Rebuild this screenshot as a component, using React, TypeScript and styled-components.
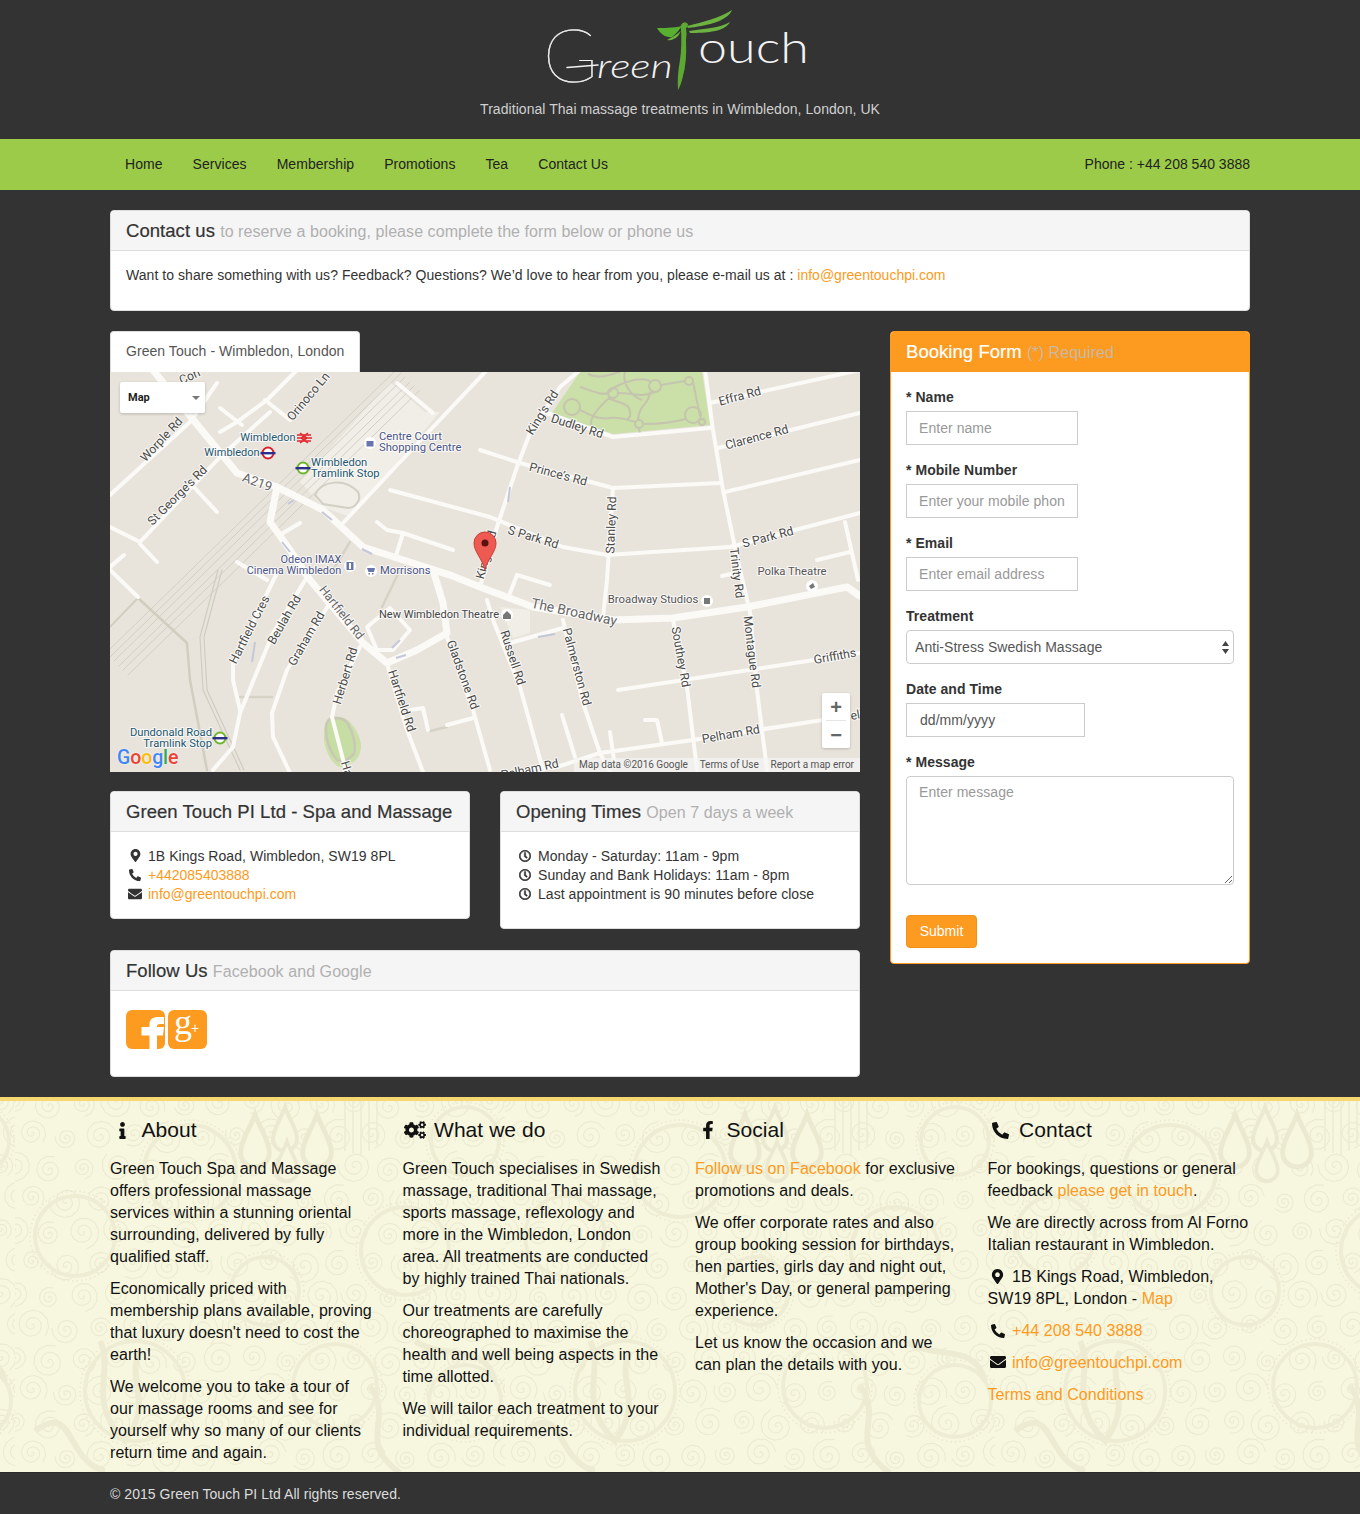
import React from 'react';
import styled, { createGlobalStyle } from 'styled-components';
import { FaMapMarkerAlt, FaPhoneAlt, FaEnvelope, FaRegClock, FaInfo, FaCogs, FaFacebookF } from 'react-icons/fa';

const ORANGE = '#fd9a20';

const Global = createGlobalStyle`
  * { box-sizing: border-box; }
  html, body { margin: 0; padding: 0; background: #333; }
  body { font-family: "Liberation Sans", Arial, sans-serif; font-size: 14px; line-height: 20px; color: #333; letter-spacing: .05px; }
  a { color: ${ORANGE}; text-decoration: none; }
  p { margin: 0 0 10px; }
`;

const Header = styled.header`
  background: #333; height: 139px; padding-top: 8px; display: flex; flex-direction: column; align-items: center;
`;
const LogoSvg = styled.svg` width: 270px; height: 85px; display: block; flex: none; `;
const Tagline = styled.div` margin-top: 6px; color: #d0d0d0; `;

const Nav = styled.nav` background: #9bcb48; height: 51px; `;
const Container = styled.div` width: 1140px; margin: 0 auto; `;
const NavInner = styled(Container)` display: flex; justify-content: space-between; align-items: center; height: 50px; `;
const NavList = styled.div` display: flex; `;
const NavLink = styled.a` color: #222; padding: 0 15px; line-height: 50px; `;
const Phone = styled.div` color: #222; letter-spacing: 0; `;

const Main = styled(Container)` padding: 20px 0; `;
const Panel = styled.section<{ $orange?: boolean }>`
  background: #fff;
  border: 1px solid ${p => (p.$orange ? ORANGE : '#ddd')};
  border-radius: 4px;
  overflow: hidden;
  a { letter-spacing: 0; }
`;
const PanelHeading = styled.h3<{ $orange?: boolean }>`
  margin: 0; height: 40px; padding: 0 15px; line-height: 40px; font-size: 18.5px; font-weight: 400;
  -webkit-text-stroke: .2px currentColor;
  background: ${p => (p.$orange ? ORANGE : '#f5f5f5')};
  color: ${p => (p.$orange ? '#fff' : '#333')};
  border-bottom: 1px solid ${p => (p.$orange ? ORANGE : '#ddd')};
  white-space: nowrap;
`;
const Small = styled.small<{ $light?: boolean }>`
  font-size: 16px; -webkit-text-stroke: 0; letter-spacing: .07px; color: ${p => (p.$light ? '#c9b9a0' : '#b0b0b0')};
`;
const PanelBody = styled.div` padding: 14px 15px 15px; `;
const Row = styled.div<{ $mt?: number }>` display: flex; gap: 30px; margin-top: ${p => p.$mt ?? 20}px; `;
const Left = styled.div` width: 750px; flex: none; `;
const Right = styled.div` width: 360px; flex: none; align-self: flex-start; `;
const FullPanel = styled(Panel)` width: 100%; `;
const Tab = styled.div`
  display: inline-block; height: 41px; line-height: 39px; padding: 0 15px; background: #fff; color: #555;
  border: 1px solid #ddd; border-bottom: 0; border-radius: 4px 4px 0 0; vertical-align: top;
`;
const MapBox = styled.div` position: relative; width: 750px; height: 400px; background: #e8e4dc; overflow: hidden; letter-spacing: 0; `;
const MapSvg = styled.svg` display: block; width: 750px; height: 400px; `;
const Road = styled.polyline<{ $w?: number; $c?: string }>`
  fill: none; stroke: ${p => p.$c ?? '#fbfaf7'}; stroke-width: ${p => p.$w ?? 4}px; stroke-linecap: round; stroke-linejoin: round;
`;
const MapLabel = styled.text<{ $size?: number; $c?: string; $anchor?: string }>`
  font-family: Roboto, "Liberation Sans", sans-serif; font-size: ${p => p.$size ?? 12.2}px;
  fill: ${p => p.$c ?? '#4a4a48'}; text-anchor: ${p => p.$anchor ?? 'middle'};
  paint-order: stroke; stroke: rgba(255,255,255,.75); stroke-width: 2px; dominant-baseline: middle;
`;
const MapType = styled.div`
  position: absolute; left: 10px; top: 10px; width: 85px; height: 31px; background: #fff; border-radius: 2px;
  box-shadow: 0 1px 3px rgba(0,0,0,.2); font: 700 11px/31px Roboto, sans-serif; color: #222; padding-left: 8px;
  &::after { content: ''; position: absolute; right: 5px; top: 14px; border: 4px solid transparent; border-top-color: #777; border-bottom: 0; }
`;
const ZoomBox = styled.div`
  position: absolute; left: 712px; top: 321px; width: 28px; height: 55px; background: #fff; border-radius: 2px;
  box-shadow: 0 1px 3px rgba(0,0,0,.2); display: flex; flex-direction: column; align-items: center;
`;
const ZoomBtn = styled.div`
  height: 27.5px; width: 100%; display: flex; align-items: center; justify-content: center;
  font: 700 20px/1 "Liberation Sans", sans-serif; color: #666;
`;
const ZoomRule = styled.div` width: 20px; height: 1px; background: #e6e6e6; flex: none; `;
const Attribution = styled.div`
  position: absolute; right: 0; bottom: 0; height: 14px; width: 286px; padding: 0 6px 0 5px; background: rgba(245,245,245,.7);
  display: flex; justify-content: space-between; font: 10px/14px Roboto, sans-serif; color: #555; white-space: nowrap;
`;
const GoogleMark = styled.div`
  position: absolute; left: 7px; bottom: 3px; font: 500 19.5px/22px Roboto, sans-serif; letter-spacing: -.1px;
  text-shadow: 0 0 2px rgba(255,255,255,.9);
`;
const GoogleLetter = styled.span<{ $c: string }>` color: ${p => p.$c}; `;

const InfoCol = styled.div` width: 360px; flex: none; `;
const InfoLines = styled.div<{ $mb?: number }>` margin-bottom: ${p => p.$mb ?? 0}px; `;
const InfoLine = styled.div` display: flex; align-items: center; height: 19px; `;
const IconCell = styled.span<{ $w: number; $gap: number; $bold?: boolean }>`
  display: inline-flex; justify-content: center; align-items: center; width: ${p => p.$w}px; margin-right: ${p => p.$gap}px; flex: none;
  vertical-align: -2px;
  svg { stroke: currentColor; stroke-width: ${p => (p.$bold ? 24 : 0)}px; }
`;
const SocialBody = styled.div` padding: 19px 15px 28px; display: flex; gap: 3px; height: 85px; `;
const SocialSvg = styled.svg` width: 39px; height: 39px; display: block; flex: none; `;

const FormBody = styled.form` padding: 15px; display: flex; flex-direction: column; align-items: flex-start; `;
const Group = styled.div<{ $mb?: number }>` width: 100%; margin-bottom: ${p => p.$mb ?? 15}px; `;
const Label = styled.label` display: block; font-weight: 700; margin-bottom: 4px; height: 20px; `;
const TextInput = styled.input<{ $w: number; $pad?: number }>`
  display: block; width: ${p => p.$w}px; height: 34px; padding: 6px ${p => p.$pad ?? 12}px; border: 1px solid #ccc; border-radius: 0; outline: 0;
  font: 14px/20px "Liberation Sans", sans-serif; letter-spacing: .05px; color: #555; background: #fff;
  &::placeholder { color: #999; opacity: 1; }
`;
const SelectWrap = styled.div` position: relative; width: 328px; height: 34px; `;
const Select = styled.select`
  appearance: none; display: block; width: 100%; height: 34px; padding: 0 8px; border: 1px solid #ccc; border-radius: 4px;
  background: #fff; font: 14px "Liberation Sans", sans-serif; letter-spacing: .05px; color: #555; outline: 0;
`;
const Arrows = styled.svg` position: absolute; right: 5px; top: 11px; width: 7px; height: 13px; pointer-events: none; `;
const TextArea = styled.textarea`
  display: block; width: 328px; height: 109px; padding: 5px 12px; border: 1px solid #ccc; border-radius: 4px; outline: 0;
  font: 14px/20px "Liberation Sans", sans-serif; letter-spacing: .05px; color: #555;
  &::placeholder { color: #999; opacity: 1; }
`;
const Submit = styled.button`
  height: 33px; width: 71px; padding: 0 0 2px; border: 1px solid #f09018; border-radius: 4px; background: ${ORANGE}; color: #fff;
  font: 14px "Liberation Sans", sans-serif;
`;

const Footer = styled.footer`
  position: relative; overflow: hidden; height: 376px; background: #f7f7e0; border-top: 4px solid #f6d873; border-bottom: 1px solid #2a2a2a; color: #111;
`;
const PatternSvg = styled.svg` position: absolute; inset: 0; width: 100%; height: 100%; `;
const FooterGrid = styled.div`
  position: relative; width: 1170px; margin: 0 auto; padding-top: 14px; display: grid; grid-template-columns: repeat(4, 292.5px);
`;
const FooterCol = styled.div`
  padding: 0 15px; font-size: 16px; line-height: 22px; letter-spacing: .06px;
  p { margin: 0 0 10px; }
`;
const FooterTitle = styled.h3`
  margin: 0 0 13px; height: 30px; font-size: 21px; line-height: 30px; font-weight: 400; color: #111; display: flex; align-items: center;
`;
const TitleIcon = styled.span` width: 25px; margin-right: 6.5px; display: inline-flex; justify-content: center; `;
const BottomBar = styled.div` background: #333; height: 41px; color: #ddd; line-height: 43px; `;

const spiral = (cx: number, cy: number, r: number, turns: number) => {
  const pts: string[] = [];
  const n = Math.round(turns * 12);
  for (let i = 0; i <= n; i++) {
    const t = i / n;
    const a = t * turns * Math.PI * 2 + cx;
    pts.push(`${(cx + Math.cos(a) * r * t).toFixed(1)},${(cy + Math.sin(a) * r * t).toFixed(1)}`);
  }
  return pts.join(' ');
};

// a dense lace of small spirals, on a hex grid whose sizes vary by a fixed rule
const lace: [number, number, number][] = [];
for (let row = 0; row < 12; row++) {
  for (let col = 0; col < 15; col++) {
    const seed = (row * 7 + col * 13) % 5;
    lace.push([col * 34 + (row % 2 ? 17 : 0), row * 32 + ((col * 5) % 7), 11 + seed * 1.6]);
  }
}
const bigRings: [number, number, number][] = [
  [175, 70, 46], [60, 135, 40], [390, 150, 44], [120, 290, 50], [320, 285, 42], [450, 300, 36], [450, 40, 34], [250, 190, 34],
];
const drops: [number, number, number][] = [[270, 30, 1], [302, 42, 1.2], [240, 42, 1.2], [272, 62, .9]];

const FooterPattern = () => (
  <PatternSvg aria-hidden="true">
    <defs>
      <pattern id="tile" width="490" height="376" patternUnits="userSpaceOnUse" patternTransform="translate(15 0)">
        {lace.map(([x, y, r]) => (
          <Road key={`${x}-${y}`} as="polyline" points={spiral(x, y, r, 2.4)} $w={1.2} $c="#ecebd2" />
        ))}
        {bigRings.map(([x, y, r]) => (
          <g key={`${x}-${y}`} fill="none">
            <circle cx={x} cy={y} r={r} stroke="#eeedd4" strokeWidth="4" />
            <circle cx={x} cy={y} r={r + 5} stroke="#eae9cf" strokeWidth="1.6" strokeDasharray="1.5 3" />
          </g>
        ))}
        {drops.map(([x, y, s]) => (
          <path key={`${x}-${y}`} transform={`translate(${x} ${y}) scale(${s})`}
            d="M0,-24 C5,-10 12,-2 12,8 A12,12 0 0 1 -12,8 C-12,-2 -5,-10 0,-24 Z"
            fill="#f7f7e0" stroke="#ebead0" strokeWidth="4" />
        ))}
        <path d="M330,0 L330,50 M338,0 L338,52 M346,0 L346,54 M354,0 L354,50 M362,0 L362,44" stroke="#ecebd2" strokeWidth="1.5" />
        <path d="M85,240 C100,270 70,300 110,340 C140,300 110,280 125,250 M20,330 C60,300 50,360 90,370" fill="none" stroke="#edecd3" strokeWidth="6" />
        <path d="M355,285 C380,320 340,340 385,372 M400,240 C430,260 470,240 480,280" fill="none" stroke="#edecd3" strokeWidth="6" />
      </pattern>
    </defs>
    <rect width="100%" height="100%" fill="url(#tile)" />
  </PatternSvg>
);

type Pts = string;
const majorRoads: Pts[] = [
  '43,-2 85,50 127,101 167,115 213,138 253,175 340,203 370,215 423,235 503,248 563,246 637,235 737,215 750,224',
  '167,115 160,150 180,178 200,208 253,271 277,291 307,278 337,261 333,231 323,198 340,203',
];
const minorRoads: Pts[] = [
  '0,123 80,50 107,11', '187,-2 157,28 127,50 110,60', '0,155 30,170 110,85 160,40', '30,172 47,190',
  '377,-2 290,90 233,151', '323,41 287,11', '280,118 380,145 453,175 497,183 620,175 750,141',
  '370,78 410,91 503,116 610,111', '267,150 277,158 293,161 343,178', '293,161 285,187',
  '470,-2 450,15 420,61 407,95 387,155 370,215', '437,41 503,65 600,56',
  '595,-2 603,58 613,118 627,185 640,240 647,318 657,398', '600,31 750,-2', '608,76 750,41', '615,120 750,88',
  '503,116 497,208 493,245', '735,150 748,208', '707,188 740,180', '612,204 625,201',
  '453,248 473,331 490,381 500,400', '377,228 383,248 410,315 433,398', '563,248 577,315 587,398',
  '508,318 750,281', '400,400 447,395 490,381 583,368 713,348 750,341', '452,343 465,385', '535,348 547,348 552,371',
  '400,271 453,256', '407,203 400,221', '407,203 440,213',
  '167,201 123,291 123,308 130,338', '197,205 163,261 130,341 123,375 103,398',
  '220,231 177,298 162,341 163,365 180,401', '250,275 227,321 222,345', '278,295 297,358 313,400',
  '337,265 363,338 380,398', '300,338 313,336 318,358', '337,353 363,346',
  '257,255 280,236 300,258 283,278 267,278 257,255', '0,198 28,225', '82,113 107,140', '127,190 157,208', '0,195 14,183',
  '110,36 132,53', '173,161 190,151', '155,28 180,48', '222,345 235,395', '500,360 505,395',
];

type L = [string, number, number, number, number?, string?];
const BLUE = '#4b5587';
const TEAL = '#1c566f';
const labels: L[] = [
  ['Worple Rd', 52, 68, -47], ['Orinoco Ln', 199, 25, -50], ['St George\u2019s Rd', 68, 124, -45], ['A219', 147, 111, 20, 13, '#666'],
  ['Con', 80, 5, -25], ['King\u2019s Rd', 433, 41, -58], ['Dudley Rd', 467, 55, 18], ['Effra Rd', 630, 25, -15],
  ['Clarence Rd', 647, 66, -15], ['Prince\u2019s Rd', 448, 103, 15], ['Stanley Rd', 502, 153, -88], ['S Park Rd', 423, 166, 17],
  ['S Park Rd', 658, 166, -15], ['Trinity Rd', 626, 201, 83], ['Polka Theatre', 682, 200, 0, 11.3, '#555'],
  ['Broadway Studios', 543, 228, 0, 11.3, '#555'], ['The Broadway', 464, 241, 12, 13.8, '#666'], ['New Wimbledon Theatre', 329, 243, 0, 11, '#444'],
  ['Hartfield Cres', 140, 258, -63], ['Beulah Rd', 175, 248, -60], ['Graham Rd', 197, 267, -60], ['Hartfield Rd', 231, 241, 52, 12.2, '#666'],
  ['Herbert Rd', 236, 304, -73], ['Hartfield Rd', 291, 329, 72], ['Gladstone Rd', 352, 303, 70], ['Russell Rd', 402, 286, 72],
  ['Palmerston Rd', 466, 295, 75], ['Southey Rd', 570, 285, 80], ['Montague Rd', 641, 280, 83], ['Griffiths', 725, 285, -10],
  ['Pelham Rd', 621, 363, -10], ['Pelham Rd', 420, 398, -12], ['Pelham Rd', 762, 341, -10], ['Ha', 236, 397, 73], ['King\u2019s Rd', 377, 183, -75],
  ['Wimbledon', 158, 66, 0, 11, TEAL], ['Wimbledon', 122, 81, 0, 11, TEAL],
  ['Odeon IMAX', 201, 188, 0, 10.9, BLUE], ['Cinema Wimbledon', 184, 199, 0, 10.9, BLUE],
];
const leftLabels: [string, number, number, string][] = [
  ['Wimbledon', 201, 91, TEAL], ['Tramlink Stop', 201, 102, TEAL], ['Centre Court', 269, 65, BLUE],
  ['Shopping Centre', 269, 76, BLUE], ['Morrisons', 270, 199, BLUE],
];
const rightLabels: [string, number, number][] = [['Dundonald Road', 102, 361], ['Tramlink Stop', 102, 372]];

const Roundel = ({ x, y, c, bar = '#2b2f8c' }: { x: number; y: number; c: string; bar?: string }) => (
  <g>
    <circle cx={x} cy={y} r="5.5" fill="#fff" stroke={c} strokeWidth="2" />
    <rect x={x - 7.5} y={y - 1} width="15" height="2.4" fill={bar} />
  </g>
);
const Poi = ({ x, y, c = '#6b75ad', children }: { x: number; y: number; c?: string; children: React.ReactNode }) => (
  <g transform={`translate(${x} ${y})`}>
    <circle r="6" fill="#fff" />
    <g fill={c}>{children}</g>
  </g>
);

const MapArt = () => (
  <MapSvg viewBox="0 0 750 400">
    <rect width="750" height="400" fill="#e8e4dc" />
    <polygon points="190,110 280,10 315,40 330,40 240,145 213,135" fill="#f0eee6" />
    <polygon points="390,235 420,238 420,261 403,266" fill="#f0eee6" />
    <path d="M205,123 C212,108 235,106 248,120 C252,128 245,136 238,136 L213,132 Z" fill="none" stroke="#d2cfc4" strokeWidth="2" />
    <polygon points="470,0 592,0 600,53 503,62 442,41" fill="#cbdfa8" />
    <g fill="none" stroke="#c5c4ae" strokeWidth="2">
      <circle cx="462" cy="35" r="8" /><circle cx="503" cy="21" r="5" /><circle cx="545" cy="14" r="6" />
      <circle cx="583" cy="43" r="8" /><circle cx="579" cy="9" r="4" /><circle cx="529" cy="52" r="4" /><circle cx="592" cy="50" r="3" />
      <path d="M470,15 C480,18 492,24 498,21 C505,12 530,4 540,9 M508,21 C525,21 530,26 545,20 M551,13 L575,9 M583,10 L590,44 M470,38 C478,42 488,48 500,46 C510,45 518,48 525,50 M534,52 C550,52 565,50 576,47 M500,25 C488,36 478,48 482,54 M498,26 C510,32 522,30 520,44 L517,48 M540,20 C538,35 530,30 528,48 M529,56 L530,62 M515,0 C512,10 520,24 532,28 M478,2 C490,8 500,2 510,0" />
    </g>
    <path d="M222,345 C232,344 238,346 243,354 C252,366 254,378 246,388 C238,394 230,398 225,392 C218,385 213,372 214,362 C214,352 216,346 222,345 Z" fill="#cbdfa8" />
    <path d="M220,347 C228,345 234,346 238,352 C244,362 246,374 244,382 C238,388 232,391 227,388 C220,380 216,368 216,358 C216,352 217,349 220,347 Z" fill="#c6dea3" stroke="#c9c8b5" strokeWidth="2.5" />
    <g>
      {[0, 4, 8, 13, 17, 22].map(d => (
        <Road key={d} points={`${-4 + d},${281 + d} ${287 + d},${-3 + d}`} $w={1} $c="#d2cfc5" />
      ))}
      <Road points="28,226 77,271 80,308 97,398" $w={2.5} $c="#d1cec0" />
      <Road points="108,198 90,265 93,318 130,398" $w={1.2} $c="#cfccc2" />
      <Road points="112,198 94,265 97,318 134,398" $w={1.2} $c="#cfccc2" />
      <Road points="130,325 162,325" $w={2.5} $c="#d6d3c6" />
      <Road points="320,359 337,355" $w={2.5} $c="#d6d3c6" />
      <Road points="28,226 -5,260" $w={2} $c="#d1cec0" />
      <Road points="223,198 240,170" $w={2.5} $c="#d6d3c6" />
      <Road points="290,198 272,235" $w={2.5} $c="#d6d3c6" />
    </g>
    {minorRoads.map(p => <Road key={p} points={p} $w={4} />)}
    {majorRoads.map(p => <Road key={p} points={p} $w={7} />)}
    <g fill="none" stroke="#c3c7da" strokeWidth="2">
      <path d="M178,132 L184,128 M212,140 L222,148 M252,177 L262,182 M172,170 L180,180 M145,270 L142,290 M290,268 L282,276 M296,283 L286,286 M428,265 L445,262 M398,130 L400,115" />
    </g>
    {labels.map(([t, x, y, r, s, c], i) => (
      <MapLabel key={`${t}${i}`} x={x} y={y} transform={r ? `rotate(${r} ${x} ${y})` : undefined} $size={s} $c={c}>{t}</MapLabel>
    ))}
    {leftLabels.map(([t, x, y, c]) => <MapLabel key={`${t}${y}`} x={x} y={y} $c={c} $anchor="start" $size={11.2}>{t}</MapLabel>)}
    {rightLabels.map(([t, x, y]) => <MapLabel key={`${t}${y}`} x={x} y={y} $c={TEAL} $anchor="end" $size={11.2}>{t}</MapLabel>)}
    <Roundel x={158} y={81} c="#d8202a" />
    <Roundel x={193} y={96} c="#6cb52d" />
    <Roundel x={110} y={366} c="#6cb52d" />
    <g fill="none" stroke="#e2242c" strokeWidth="1.4">
      <path d="M187,63 H201 M187,66 H202 M187,69 H201 M190,61 L197,66 L190,71 M198,61 L191,66 L198,71" />
    </g>
    <Poi x={260} y={71}><rect x="-3.5" y="-2" width="7" height="5.5" /></Poi>
    <Poi x={261} y={199}><path d="M-4,-3 H4 L3,1 H-2.5 Z M-2.5,2 h1.5 v1.5 h-1.5 Z M1,2 h1.5 v1.5 h-1.5 Z" /></Poi>
    <Poi x={240} y={194}><path d="M-3.5,-4 H3.5 V4 H-3.5 Z M-1,-3 V3 H1 V-3 Z" fillRule="evenodd" /></Poi>
    <Poi x={397} y={243} c="#777"><path d="M0,-4 L4,0 V4 H-4 V0 Z" /></Poi>
    <Poi x={597} y={229} c="#777"><rect x="-3" y="-3" width="6" height="6" /></Poi>
    <Poi x={702} y={214} c="#777"><path d="M-3,0 L1,-3 L3,1 L-1,3 Z" /></Poi>
    <g>
      <path d="M375,198 C372,186 364,180 364,171 A11,11 0 0 1 386,171 C386,180 378,186 375,198 Z" fill="#ee5a52" stroke="#c5413b" strokeWidth="1" />
      <circle cx="375" cy="171" r="3.5" fill="#5a1210" />
    </g>
  </MapSvg>
);

const Logo = () => (
  <LogoSvg viewBox="0 0 270 85" role="img" aria-label="Green Touch">
    <text x="-2" y="74" fontFamily="Lato, 'Open Sans', sans-serif" fontWeight="100" fontSize="74" fill="#f2f2f2" stroke="#f2f2f2" strokeWidth=".5">G</text>
    <path d="M22,59.5 L53,57" stroke="#f2f2f2" strokeWidth="1.6" fill="none" strokeLinecap="round" />
    <text x="52" y="70" fontFamily="Lato, 'Open Sans', sans-serif" fontWeight="300" fontStyle="italic" fontSize="34" fill="#f2f2f2" textLength="76" lengthAdjust="spacingAndGlyphs">reen</text>
    <text x="153" y="55" fontFamily="Lato, 'Open Sans', sans-serif" fontWeight="300" fontSize="44" fill="#f2f2f2" textLength="111" lengthAdjust="spacingAndGlyphs">ouch</text>
    <path d="M136,17 q3,-5 7,-1 q0,3 -2,4 q1,5 0,12 q1,22 -3,36 q-2,9 -5,14 q-1,-14 2,-30 q2,-14 1,-31 q-1,-2 0,-4 Z" fill="#5ca832" />
    <path d="M142,18 C158,14 175,10 187,2 C182,14 160,18 143,20 Z" fill="#6cb33f" />
    <path d="M144,23 C158,21 175,20 185,14 C180,24 160,25 145,25 Z" fill="#6cb33f" />
    <path d="M137,18 C128,20 118,20 112,20 C116,27 122,30 127,29 C131,26 134,22 137,18 Z" fill="#58b030" />
    <path d="M136,23 C131,27 126,30 122,32 C126,33 130,31 133,28 Z" fill="#6cb33f" />
  </LogoSvg>
);

const FacebookTile = () => (
  <SocialSvg viewBox="0 0 39 39" role="img" aria-label="Facebook">
    <rect width="39" height="39" rx="6" fill={ORANGE} />
    <path d="M23.5,39 V25.5 H15.5 V17 H23.5 V14.5 C23.5,9 27,7 32,7 H38 V14 H34 C31.5,14 31,15 31,17 H38 L37,25.5 H31 V39 Z" fill="#fff" />
  </SocialSvg>
);
const GoogleTile = () => (
  <SocialSvg viewBox="0 0 39 39" role="img" aria-label="Google plus">
    <rect width="39" height="39" rx="6" fill={ORANGE} />
    <text x="6" y="24" fontFamily="'Liberation Serif', serif" fontSize="36" fill="#fff">g</text>
    <text x="23" y="23" fontFamily="'Liberation Sans', sans-serif" fontSize="14" fill="#fff">+</text>
  </SocialSvg>
);

const Ic = ({ Cmp, s = 14, w = 18, gap = 4, bold }: { Cmp: React.ComponentType<{ size?: number }>; s?: number; w?: number; gap?: number; bold?: boolean }) => (
  <IconCell $w={w} $gap={gap} $bold={bold}><Cmp size={s} /></IconCell>
);

export default function App() {
  return (
    <>
      <Global />
      <Header>
        <Logo />
        <Tagline>Traditional Thai massage treatments in Wimbledon, London, UK</Tagline>
      </Header>
      <Nav>
        <NavInner>
          <NavList>
            {['Home', 'Services', 'Membership', 'Promotions', 'Tea', 'Contact Us'].map(n => <NavLink key={n} href="#">{n}</NavLink>)}
          </NavList>
          <Phone>Phone : +44 208 540 3888</Phone>
        </NavInner>
      </Nav>
      <Main>
        <Panel>
          <PanelHeading>Contact us <Small>to reserve a booking, please complete the form below or phone us</Small></PanelHeading>
          <PanelBody>
            <p>Want to share something with us? Feedback? Questions? We’d love to hear from you, please e-mail us at : <a href="#">info@greentouchpi.com</a></p>
          </PanelBody>
        </Panel>
        <Row>
          <Left>
            <Tab>Green Touch - Wimbledon, London</Tab>
            <MapBox>
              <MapArt />
              <MapType>Map</MapType>
              <ZoomBox>
                <ZoomBtn>+</ZoomBtn>
                <ZoomRule />
                <ZoomBtn>−</ZoomBtn>
              </ZoomBox>
              <GoogleMark>
                <GoogleLetter $c="#4285f4">G</GoogleLetter><GoogleLetter $c="#ea4335">o</GoogleLetter><GoogleLetter $c="#fbbc05">o</GoogleLetter><GoogleLetter $c="#4285f4">g</GoogleLetter><GoogleLetter $c="#34a853">l</GoogleLetter><GoogleLetter $c="#ea4335">e</GoogleLetter>
              </GoogleMark>
              <Attribution><span>Map data ©2016 Google</span><span>Terms of Use</span><span>Report a map error</span></Attribution>
            </MapBox>
            <Row $mt={19}>
              <InfoCol>
                <Panel>
                  <PanelHeading>Green Touch PI Ltd - Spa and Massage</PanelHeading>
                  <PanelBody>
                    <InfoLines>
                      <InfoLine><Ic Cmp={FaMapMarkerAlt} s={13} />1B Kings Road, Wimbledon, SW19 8PL</InfoLine>
                      <InfoLine><Ic Cmp={FaPhoneAlt} s={12} /><a href="#">+442085403888</a></InfoLine>
                      <InfoLine><Ic Cmp={FaEnvelope} s={14} /><a href="#">info@greentouchpi.com</a></InfoLine>
                    </InfoLines>
                  </PanelBody>
                </Panel>
              </InfoCol>
              <InfoCol>
                <Panel>
                  <PanelHeading>Opening Times <Small>Open 7 days a week</Small></PanelHeading>
                  <PanelBody>
                    <InfoLines $mb={10}>
                      <InfoLine><Ic Cmp={FaRegClock} s={12} bold />Monday - Saturday: 11am - 9pm</InfoLine>
                      <InfoLine><Ic Cmp={FaRegClock} s={12} bold />Sunday and Bank Holidays: 11am - 8pm</InfoLine>
                      <InfoLine><Ic Cmp={FaRegClock} s={12} bold />Last appointment is 90 minutes before close</InfoLine>
                    </InfoLines>
                  </PanelBody>
                </Panel>
              </InfoCol>
            </Row>
            <Row $mt={21}>
              <FullPanel>
                <PanelHeading>Follow Us <Small>Facebook and Google</Small></PanelHeading>
                <SocialBody>
                  <FacebookTile />
                  <GoogleTile />
                </SocialBody>
              </FullPanel>
            </Row>
          </Left>
          <Right>
            <Panel $orange>
              <PanelHeading $orange>Booking Form <Small $light>(*) Required</Small></PanelHeading>
              <FormBody onSubmit={e => e.preventDefault()}>
                <Group><Label>* Name</Label><TextInput $w={172} placeholder="Enter name" /></Group>
                <Group><Label>* Mobile Number</Label><TextInput $w={172} placeholder="Enter your mobile phone number" /></Group>
                <Group><Label>* Email</Label><TextInput $w={172} placeholder="Enter email address" /></Group>
                <Group>
                  <Label>Treatment</Label>
                  <SelectWrap>
                    <Select defaultValue="a"><option value="a">Anti-Stress Swedish Massage</option></Select>
                    <Arrows viewBox="0 0 7 13"><path d="M3.5,0 L7,5 H0 Z M3.5,13 L7,8 H0 Z" fill="#444" /></Arrows>
                  </SelectWrap>
                </Group>
                <Group><Label>Date and Time</Label><TextInput $w={179} $pad={13} defaultValue="dd/mm/yyyy" /></Group>
                <Group $mb={30}><Label>* Message</Label><TextArea placeholder="Enter message" /></Group>
                <Submit type="submit">Submit</Submit>
              </FormBody>
            </Panel>
          </Right>
        </Row>
      </Main>
      <Footer>
        <FooterPattern />
        <FooterGrid>
          <FooterCol>
            <FooterTitle><TitleIcon><FaInfo size={17} /></TitleIcon>About</FooterTitle>
            <p>Green Touch Spa and Massage offers professional massage services within a stunning oriental surrounding, delivered by fully qualified staff.</p>
            <p>Economically priced with membership plans available, proving that luxury doesn't need to cost the earth!</p>
            <p>We welcome you to take a tour of our massage rooms and see for yourself why so many of our clients return time and again.</p>
          </FooterCol>
          <FooterCol>
            <FooterTitle><TitleIcon><FaCogs size={22} /></TitleIcon>What we do</FooterTitle>
            <p>Green Touch specialises in Swedish massage, traditional Thai massage, sports massage, reflexology and more in the Wimbledon, London area. All treatments are conducted by highly trained Thai nationals.</p>
            <p>Our treatments are carefully choreographed to maximise the health and well being aspects in the time allotted.</p>
            <p>We will tailor each treatment to your individual requirements.</p>
          </FooterCol>
          <FooterCol>
            <FooterTitle><TitleIcon><FaFacebookF size={18} /></TitleIcon>Social</FooterTitle>
            <p><a href="#">Follow us on Facebook</a> for exclusive promotions and deals.</p>
            <p>We offer corporate rates and also group booking session for birthdays, hen parties, girls day and night out, Mother's Day, or general pampering experience.</p>
            <p>Let us know the occasion and we can plan the details with you.</p>
          </FooterCol>
          <FooterCol>
            <FooterTitle><TitleIcon><FaPhoneAlt size={17} /></TitleIcon>Contact</FooterTitle>
            <p>For bookings, questions or general feedback <a href="#">please get in touch</a>.</p>
            <p>We are directly across from Al Forno Italian restaurant in Wimbledon.</p>
            <p><Ic Cmp={FaMapMarkerAlt} s={15} w={20} gap={4.5} />1B Kings Road, Wimbledon, SW19 8PL, London - <a href="#">Map</a></p>
            <p><Ic Cmp={FaPhoneAlt} s={14} w={20} gap={4.5} /><a href="#">+44 208 540 3888</a></p>
            <p><Ic Cmp={FaEnvelope} s={16} w={20} gap={4.5} /><a href="#">info@greentouchpi.com</a></p>
            <p><a href="#">Terms and Conditions</a></p>
          </FooterCol>
        </FooterGrid>
      </Footer>
      <BottomBar><Container>© 2015 Green Touch PI Ltd All rights reserved.</Container></BottomBar>
    </>
  );
}
